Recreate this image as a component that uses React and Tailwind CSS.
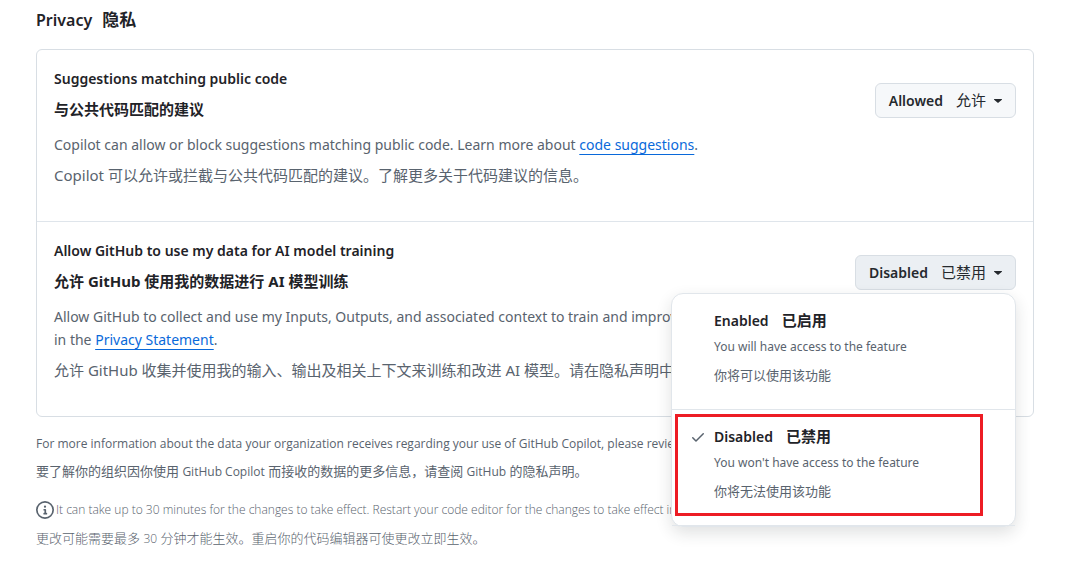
import { useState } from "react";

function Caret() {
  return (
    <svg viewBox="0 0 8 4" className="h-1 w-2 shrink-0" aria-hidden="true">
      <path d="M0.4 0h7.2c.35 0 .5.4.27.65L4.3 3.85a.43.43 0 0 1-.6 0L.13.65C-.1.4.05 0 .4 0Z" fill="currentColor" />
    </svg>
  );
}

function CheckMark() {
  return (
    <svg viewBox="0 0 16 16" className="size-4" fill="#59636e" aria-hidden="true">
      <path d="M13.78 4.22a.75.75 0 0 1 0 1.06l-7.25 7.25a.75.75 0 0 1-1.06 0L2.22 9.28a.751.751 0 0 1 .018-1.042.751.751 0 0 1 1.042-.018L6 10.94l6.72-6.72a.75.75 0 0 1 1.06 0Z" />
    </svg>
  );
}

function InfoIcon() {
  return (
    <svg viewBox="0 0 16 16" className="size-[18px] shrink-0" fill="#59636e" aria-hidden="true">
      <path d="M0 8a8 8 0 1 1 16 0A8 8 0 0 1 0 8Zm8-6.5a6.5 6.5 0 1 0 0 13 6.5 6.5 0 0 0 0-13ZM6.5 7.75A.75.75 0 0 1 7.25 7h1a.75.75 0 0 1 .75.75v2.75h.25a.75.75 0 0 1 0 1.5h-2a.75.75 0 0 1 0-1.5h.25v-2h-.25a.75.75 0 0 1-.75-.75ZM8 6a1 1 0 1 1 0-2 1 1 0 0 1 0 2Z" />
    </svg>
  );
}

function DropdownButton({ label, translation, open = false, onClick }) {
  return (
    <button
      type="button"
      aria-haspopup="menu"
      aria-expanded={open}
      onClick={onClick}
      className={
        "flex h-[35px] items-center rounded-md border border-[#d8dee4] px-[13px] text-[#25292e] " +
        (open ? "bg-[#ebeff3]" : "bg-[#f6f8fa]")
      }
    >
      <span className="text-[14px] font-semibold">{label}</span>
      <span className="ml-[13px] text-[15px]">{translation}</span>
      <span className="ml-2">
        <Caret />
      </span>
    </button>
  );
}

function MenuOption({ label, translation, description, translatedDescription, selected, onSelect }) {
  return (
    <button
      type="button"
      role="menuitemradio"
      aria-checked={selected}
      onClick={onSelect}
      className="flex w-full px-[18px] pt-[15px] pb-6 text-left"
    >
      <span className="flex h-[23px] w-6 shrink-0 items-center">{selected && <CheckMark />}</span>
      <span className="flex flex-col">
        <span className="flex h-[23px] items-center gap-[13px] text-[#1f2328]">
          <span className="text-[14px] font-semibold">{label}</span>
          <span className="text-[15px] font-bold">{translation}</span>
        </span>
        <span className="mt-[5px] text-[12px] leading-5 text-[#59636e]">{description}</span>
        <span className="mt-2 text-[13px] leading-5 text-[#59636e]">{translatedDescription}</span>
      </span>
    </button>
  );
}

function Setting({ title, translatedTitle, description, translatedDescription, children }) {
  return (
    <div className="flex items-start justify-between pt-[17px] pr-[17px] pb-[34px] pl-[17px]">
      <div className="min-w-0 flex-1">
        <h3 className="text-[14px] leading-[23px] font-semibold text-[#1f2328]">{title}</h3>
        <p className="mt-2 text-[15px] leading-[23px] font-bold text-[#1f2328]">{translatedTitle}</p>
        <p className="mt-3 text-[14px] leading-[23px] whitespace-nowrap text-[#59636e]">{description}</p>
        <p className="mt-2 text-[15px] leading-[23px] whitespace-nowrap text-[#59636e]">{translatedDescription}</p>
      </div>
      <div className="relative mt-4">{children}</div>
    </div>
  );
}

const options = [
  {
    label: "Enabled",
    translation: "已启用",
    description: "You will have access to the feature",
    translatedDescription: "你将可以使用该功能",
  },
  {
    label: "Disabled",
    translation: "已禁用",
    description: "You won't have access to the feature",
    translatedDescription: "你将无法使用该功能",
  },
];

export default function App() {
  const [open, setOpen] = useState(true);
  const [choice, setChoice] = useState(1);

  return (
    <main className="min-h-screen overflow-x-hidden bg-white pt-2 pr-[46px] pb-4 pl-9 font-['Noto_Sans','Noto_Sans_CJK_SC',sans-serif]">
      <h2 className="flex h-6 items-center gap-[10px] text-[#1f2328]">
        <span className="text-[16px] font-semibold">Privacy</span>
        <span className="text-[17px] font-bold">隐私</span>
      </h2>

      <section className="mt-[17px] rounded-md border border-[#d8dee4]">
        <Setting
          title="Suggestions matching public code"
          translatedTitle="与公共代码匹配的建议"
          description={
            <>
              Copilot can allow or block suggestions matching public code. Learn more about{" "}
              <a href="#code-suggestions" className="text-[#0969da] underline underline-offset-4">
                code suggestions
              </a>
              .
            </>
          }
          translatedDescription="Copilot 可以允许或拦截与公共代码匹配的建议。了解更多关于代码建议的信息。"
        >
          <DropdownButton label="Allowed" translation="允许" />
        </Setting>

        <div className="border-t border-[#dfe5eb]">
          <Setting
            title="Allow GitHub to use my data for AI model training"
            translatedTitle="允许 GitHub 使用我的数据进行 AI 模型训练"
            description={
              <>
                Allow GitHub to collect and use my Inputs, Outputs, and associated context to train and improve
                <br />
                in the{" "}
                <a href="#privacy-statement" className="text-[#0969da] underline underline-offset-4">
                  Privacy Statement
                </a>
                .
              </>
            }
            translatedDescription="允许 GitHub 收集并使用我的输入、输出及相关上下文来训练和改进 AI 模型。请在隐私声明中"
          >
            <DropdownButton
              label={options[choice].label}
              translation={options[choice].translation}
              open={open}
              onClick={() => setOpen(!open)}
            />
            {open && (
              <div
                role="menu"
                className="absolute top-full right-0 z-10 mt-[3px] w-[345px] divide-y divide-[#e1e6eb] rounded-xl border border-[#e1e6eb] bg-white shadow-[0_6px_16px_rgba(37,41,46,0.14)]"
              >
                {options.map((option, index) => (
                  <MenuOption
                    key={option.label}
                    {...option}
                    selected={choice === index}
                    onSelect={() => setChoice(index)}
                  />
                ))}
                <div
                  aria-hidden="true"
                  className="pointer-events-none absolute bottom-[10px] left-[3px] h-[102px] w-[308px] border-3 border-[#ed1c24]"
                />
              </div>
            )}
          </Setting>
        </div>
      </section>

      <footer className="mt-[17px] font-['Open_Sans','Noto_Sans_CJK_SC',sans-serif] whitespace-nowrap">
        <p className="text-[12px] leading-5 text-[#59636e]">
          For more information about the data your organization receives regarding your use of GitHub Copilot, please review
        </p>
        <p className="mt-[7px] text-[13px] leading-5 text-[#59636e]">
          要了解你的组织因你使用 <span className="text-[12px]">GitHub Copilot</span> 而接收的数据的更多信息，请查阅{" "}
          <span className="text-[12px]">GitHub</span> 的隐私声明。
        </p>
        <p className="mt-[18px] flex items-center gap-[2px] text-[12px] leading-5 font-light text-[#59636e]">
          <InfoIcon />
          It can take up to 30 minutes for the changes to take effect. Restart your code editor for the changes to take effect immediately.
        </p>
        <p className="mt-2 text-[13px] leading-5 font-light text-[#59636e]">
          更改可能需要最多 <span className="text-[12px]">30</span> 分钟才能生效。重启你的代码编辑器可使更改立即生效。
        </p>
      </footer>
    </main>
  );
}
